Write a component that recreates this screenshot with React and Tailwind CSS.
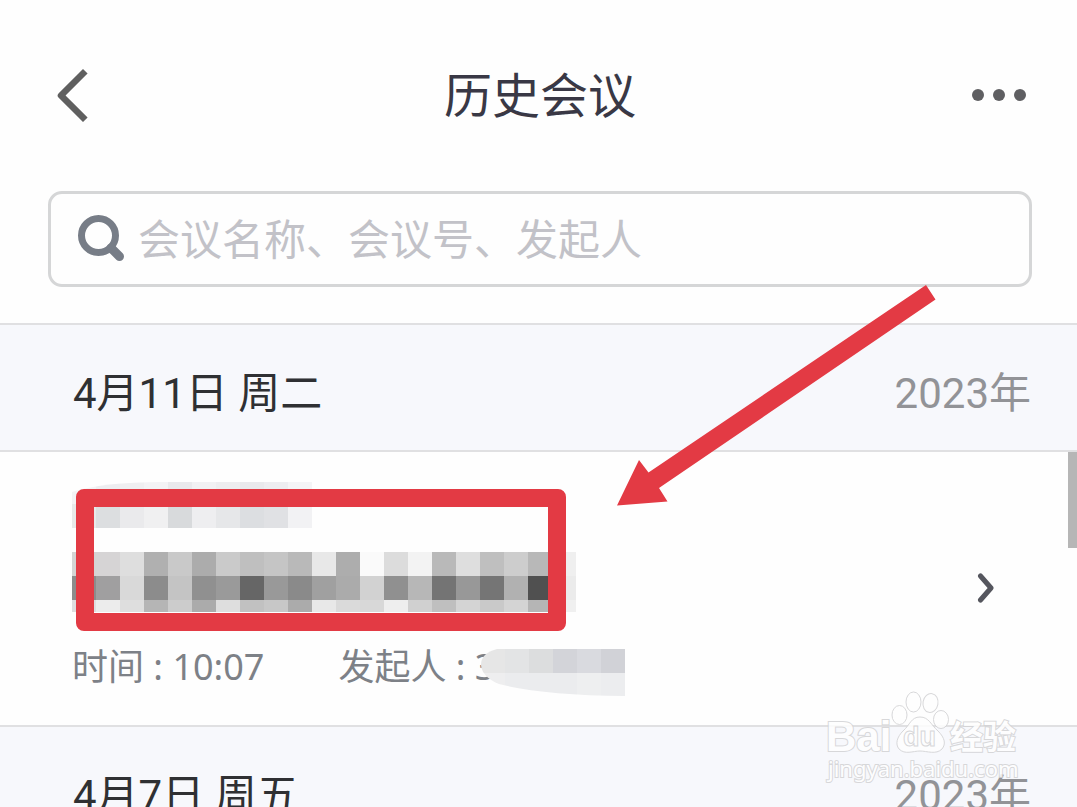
import React, { useState } from "react";

const CELL = 24;

// モザイクの濃淡 (1行ずつ)
const titleMosaic = [
    ["#f3f3f5", "#ededf0", "#efeff1", "#f3f3f5", "#e9e9ec", "#f1f1f3", "#ededef", "#e9e9ec", "#ededf0", "#f4f4f6"],
    ["#e8e9e9", "#dcdee0", "#eaeaec", "#f0f0f1", "#d8dadc", "#eeeef0", "#e6e7e9", "#dcdee1", "#e0e1e4", "#f2f2f4"],
    [],
    [
        "#d4d4d4", "#d6d4d5", "#dedede", "#b0b0b0", "#c9c9c9", "#acacac", "#cacaca", "#bfbfbf", "#c5c5c5", "#b9b9b9", "#e8e8e8",
        "#adadad", "#fafafa", "#dcdcdc", "#f3f3f3", "#b9b9b9", "#dedede", "#bfbfbf", "#cdcdcd", "#b8b8b8", "#efefef",
    ],
    [
        "#8c8c8c", "#a09fa0", "#d9d9d9", "#8c8c8c", "#c4c4c4", "#909090", "#9a9a9a", "#666666", "#999999", "#8a8a8a", "#a0a0a0",
        "#ababab", "#d2d2d2", "#909090", "#b7b7b7", "#747474", "#989898", "#757575", "#b1b1b1", "#505050", "#ebebeb",
    ],
    [
        "#dddddf", "#ececec", "#dedede", "#b5b5b5", "#cccccc", "#ababab", "#dedede", "#c1c1c1", "#c7c7c7", "#ababab", "#e8e8e8",
        "#dadada", "#d8d8d8", "#eeeeee", "#d0d0d0", "#bfbfbf", "#d4d4d4", "#c9c9c9", "#d4d4d4", "#b5b5b5", "#f0f0f0",
    ],
];

const hostMosaic = [
    ["#e6e6e6", "#e3e4e5", "#dcddde", "#d3d4d9", "#d9dadf", "#d1d2d7"],
    ["#eeeeef", "#ebecee", "#ebecee", "#ebecee", "#eeeff0", "#ecedef"],
];

const Mosaic = ({ rows }) =>
    rows.map((row, y) =>
        row.map((color, x) => (
            <rect key={`${x}-${y}`} x={x * CELL} y={y * CELL} width={CELL} height={CELL} fill={color} />
        ))
    );

const DateHeader = ({ date, year }) => (
    <div className="flex shrink-0 justify-between border-y-2 border-[#e0e0e2] bg-[#f7f8fc] pt-[39px] pr-[46px] pb-[26px] pl-[73px] text-[42px] leading-[60px]">
        <h2 className="text-[#2f3033]">{date}</h2>
        <span className="text-[#929397]">{year}</span>
    </div>
);

const MeetingRow = ({ time }) => (
    <article className="relative flex shrink-0 items-center justify-between pt-7 pr-[82px] pb-8 pl-[72px]">
        <div>
            <div className="relative">
                <svg width="504" height="132" viewBox="0 0 504 132" shapeRendering="crispEdges" aria-hidden="true">
                    <clipPath id="title-clip">
                        <path d="M0 24 L0 12 Q30 2 90 2 H504 V132 H0 Z" />
                    </clipPath>
                    <g clipPath="url(#title-clip)">
                        <Mosaic rows={titleMosaic} />
                    </g>
                </svg>
                {/* 赤枠 */}
                <div className="absolute top-[9px] left-1 h-[142px] w-[490px] rounded-lg border-[18px] border-[#e33a44]" />
            </div>
            <div className="mt-[29px] flex gap-[74px] font-['Noto_Sans','Noto_Sans_CJK_SC',sans-serif] text-4xl leading-[52px] text-[#7d8187]">
                <span>时间 : {time}</span>
                <span className="relative">
                    发起人 : 3
                    <svg
                        className="absolute top-2 left-[143px]"
                        width="144"
                        height="48"
                        viewBox="0 0 144 48"
                        aria-hidden="true"
                    >
                        <clipPath id="host-clip">
                            <path d="M144 0 H16 Q0 4 0 16 Q1 28 18 35 Q60 46 144 47 Z" />
                        </clipPath>
                        <g clipPath="url(#host-clip)">
                            <Mosaic rows={hostMosaic} />
                        </g>
                    </svg>
                </span>
            </div>
        </div>
        <button aria-label="查看详情">
            <svg width="20" height="32" viewBox="0 0 20 32" fill="none">
                <path d="M5.5 5 L16 17 L5.5 29" stroke="#55565e" strokeWidth="5" strokeLinecap="round" strokeLinejoin="round" />
            </svg>
        </button>
        {/* スクロールバー */}
        <div className="absolute top-0 right-0 h-24 w-[9px] bg-[#b6b6b6]" />
    </article>
);

const Arrow = () => (
    <svg className="pointer-events-none absolute top-[285px] left-[616px]" width="320" height="222" viewBox="0 0 320 222" aria-hidden="true">
        <path d="M1 220.5 L23 175 L32.5 187.5 L310 0 L319.5 14.5 L43 203 L51.5 216.5 Z" fill="#e33a44" />
    </svg>
);

const Watermark = () => (
    <svg
        className="pointer-events-none absolute right-[55px] bottom-[17px]"
        width="202"
        height="100"
        viewBox="820 690 202 100"
        fill="#ffffff"
        stroke="#d2d2d4"
        strokeWidth="1"
        opacity="0.85"
    >
        <g className="font-['Liberation_Sans','Noto_Sans_CJK_SC',sans-serif] font-bold">
            <text x="826" y="751" fontSize="42" strokeWidth="2" paintOrder="stroke">Bai</text>
            <text x="950" y="749" fontSize="33" strokeWidth="2" paintOrder="stroke">经验</text>
        </g>
        <ellipse cx="899.5" cy="715" rx="7.5" ry="9.5" />
        <ellipse cx="913.5" cy="702" rx="7.5" ry="10" />
        <ellipse cx="930.5" cy="703" rx="7.5" ry="9.5" transform="rotate(10 930.5 703)" />
        <ellipse cx="941" cy="719.5" rx="7.5" ry="9" />
        <path d="M920 717 C929 717 931 725 938 731 C945 738 946 744 942 749 C936 755 927 751 920 751 C913 751 905 755 899 749 C895 744 897 737 903 731 C910 725 911 717 920 717 Z" />
        <text x="903" y="746" fontSize="27" className="font-['Liberation_Sans',sans-serif] font-bold">du</text>
        <text
            x="828"
            y="777"
            fontSize="22"
            strokeWidth="2"
            paintOrder="stroke"
            className="font-['Noto_Sans',sans-serif]"
        >
            jingyan.baidu.com
        </text>
    </svg>
);

const App = () => {
    const [keyword, setKeyword] = useState("");

    return (
        <div className="relative flex h-screen flex-col overflow-hidden bg-[#fefefe] font-['Roboto','Noto_Sans_CJK_SC',sans-serif]">
            <header className="flex shrink-0 items-center justify-between pt-16 pr-[45px] pl-12">
                <button aria-label="返回" className="w-16">
                    <svg width="48" height="64" viewBox="0 0 48 64" fill="none">
                        <path d="M35 9.5 L13 31.5 L35 53.5" stroke="#5f5f5f" strokeWidth="6.5" strokeLinecap="square" strokeLinejoin="round" />
                    </svg>
                </button>
                <h1 className="pt-[2px] text-5xl leading-[62px] text-[#393845]">历史会议</h1>
                <button aria-label="更多" className="flex w-16 justify-end pr-[5px]">
                    <svg width="56" height="14" viewBox="0 0 56 14" fill="#5f5f62">
                        <circle cx="7" cy="6" r="6" />
                        <circle cx="28" cy="6" r="6" />
                        <circle cx="49" cy="6" r="6" />
                    </svg>
                </button>
            </header>

            <div className="shrink-0 pt-[63px] pr-[45px] pb-9 pl-12">
                <label className="flex h-24 items-center gap-[11px] rounded-[14px] border-3 border-[#d5d6d7] pr-6 pl-[26px]">
                    <svg className="shrink-0" width="50" height="50" viewBox="0 0 50 50" fill="none" stroke="#777d87">
                        <circle cx="21.5" cy="21.5" r="17" strokeWidth="7" />
                        <path d="M34 34 L42.5 42.5" strokeWidth="9" strokeLinecap="round" />
                    </svg>
                    <input
                        type="text"
                        aria-label="搜索会议"
                        value={keyword}
                        onChange={(e) => setKeyword(e.target.value)}
                        placeholder="会议名称、会议号、发起人"
                        className="min-w-0 flex-1 pt-1 text-[42px] leading-[60px] text-[#2f3033] outline-none placeholder:text-[#c2c2c8]"
                    />
                </label>
            </div>

            <DateHeader date="4月11日 周二" year="2023年" />
            <MeetingRow time="10:07" />
            <DateHeader date="4月7日 周五" year="2023年" />

            <Arrow />
            <Watermark />
        </div>
    );
};

export default App;
